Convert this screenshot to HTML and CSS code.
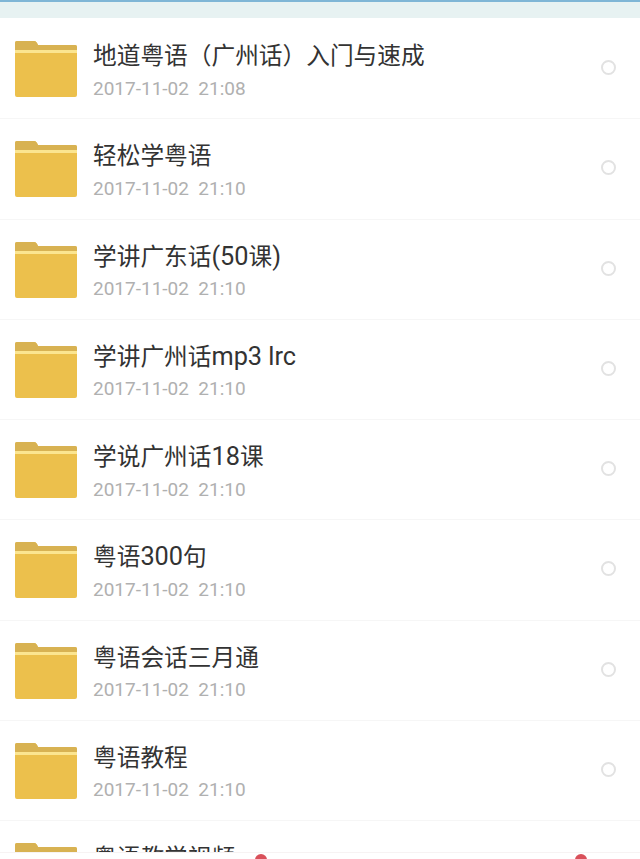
FILE: index.html
```html
<!DOCTYPE html>
<html lang="zh-CN">
<head>
<meta charset="utf-8">
<title>粤语文件夹</title>
<link rel="stylesheet" href="styles.css">
</head>
<body>
<svg class="defs" width="0" height="0" aria-hidden="true">
  <symbol id="folder" viewBox="0 0 62 56">
    <path d="M2 0H19Q21 0 22 2L23 4H60Q62 4 62 6V54Q62 56 60 56H2Q0 56 0 54V2Q0 0 2 0Z" fill="#ecc04c"/>
    <path d="M2 0H19Q21 0 22 2L23 4H60Q62 4 62 6V9H0V2Q0 0 2 0Z" fill="#d8b252"/>
    <rect x="0" y="9" width="62" height="3" fill="#fbe590"/>
  </symbol>
</svg>
<div class="page">
  <div class="topbar"></div>
  <main class="list">
    <div class="row">
      <svg class="folder"><use href="#folder"/></svg>
      <div class="info"><div class="name">地道粤语（广州话）入门与速成</div><div class="date">2017-11-02&nbsp; 21:08</div></div>
      <span class="radio"></span>
    </div>
    <div class="row">
      <svg class="folder"><use href="#folder"/></svg>
      <div class="info"><div class="name">轻松学粤语</div><div class="date">2017-11-02&nbsp; 21:10</div></div>
      <span class="radio"></span>
    </div>
    <div class="row">
      <svg class="folder"><use href="#folder"/></svg>
      <div class="info"><div class="name">学讲广东话<span class="latin">(50</span>课<span class="latin">)</span></div><div class="date">2017-11-02&nbsp; 21:10</div></div>
      <span class="radio"></span>
    </div>
    <div class="row">
      <svg class="folder"><use href="#folder"/></svg>
      <div class="info"><div class="name">学讲广州话<span class="latin">mp3 lrc</span></div><div class="date">2017-11-02&nbsp; 21:10</div></div>
      <span class="radio"></span>
    </div>
    <div class="row">
      <svg class="folder"><use href="#folder"/></svg>
      <div class="info"><div class="name">学说广州话<span class="latin">18</span>课</div><div class="date">2017-11-02&nbsp; 21:10</div></div>
      <span class="radio"></span>
    </div>
    <div class="row">
      <svg class="folder"><use href="#folder"/></svg>
      <div class="info"><div class="name">粤语<span class="latin">300</span>句</div><div class="date">2017-11-02&nbsp; 21:10</div></div>
      <span class="radio"></span>
    </div>
    <div class="row">
      <svg class="folder"><use href="#folder"/></svg>
      <div class="info"><div class="name">粤语会话三月通</div><div class="date">2017-11-02&nbsp; 21:10</div></div>
      <span class="radio"></span>
    </div>
    <div class="row">
      <svg class="folder"><use href="#folder"/></svg>
      <div class="info"><div class="name">粤语教程</div><div class="date">2017-11-02&nbsp; 21:10</div></div>
      <span class="radio"></span>
    </div>
    <div class="row">
      <svg class="folder"><use href="#folder"/></svg>
      <div class="info"><div class="name">粤语教学视频</div></div>
    </div>
  </main>
  <footer class="tabs">
    <span class="dot"></span>
    <span class="dot"></span>
  </footer>
</div>
</body>
</html>
```

FILE: styles.css
```css
html, body {
  margin: 0;
  padding: 0;
  background: #fff;
}
.defs {
  display: block;
  height: 0;
}
.page {
  display: flex;
  flex-direction: column;
  height: 859px;
  overflow: hidden;
  font-family: Roboto, "Noto Sans CJK SC", sans-serif;
}
.topbar {
  flex: none;
  height: 16px;
  border-top: 2px solid #7fb6d6;
  background: #e7f2f2;
}
.list {
  flex: 1;
  min-height: 0;
  overflow: hidden;
  padding-top: 1px;
}
.row {
  box-sizing: border-box;
  display: flex;
  align-items: flex-start;
  height: 100.25px;
  padding: 22px 24px 0 15px;
  border-bottom: 1px solid #f6f6f6;
}
.folder {
  flex: none;
  width: 62px;
  height: 56px;
}
.info {
  flex: 1;
  min-width: 0;
  margin-left: 16px;
}
.name {
  margin-top: -2px;
  height: 34px;
  font-size: 23.7px;
  line-height: 34px;
  color: #333;
  white-space: nowrap;
}
.latin {
  font-size: 25.3px;
}
.date {
  margin-top: 3.5px;
  font-size: 19px;
  line-height: 24px;
  color: #b0b0b0;
}
.radio {
  flex: none;
  box-sizing: border-box;
  width: 15px;
  height: 15px;
  margin-top: 19px;
  border: 2px solid #e2e2e2;
  border-radius: 50%;
}
.tabs {
  flex: none;
  display: flex;
  height: 7px;
  background: #fff;
  border-top: 1px solid #f7f3f3;
  box-sizing: border-box;
  padding-left: 255px;
  gap: 308px;
}
.dot {
  flex: none;
  width: 12px;
  height: 12px;
  margin-top: 1px;
  border-radius: 50%;
  background: #d9505a;
}
```
